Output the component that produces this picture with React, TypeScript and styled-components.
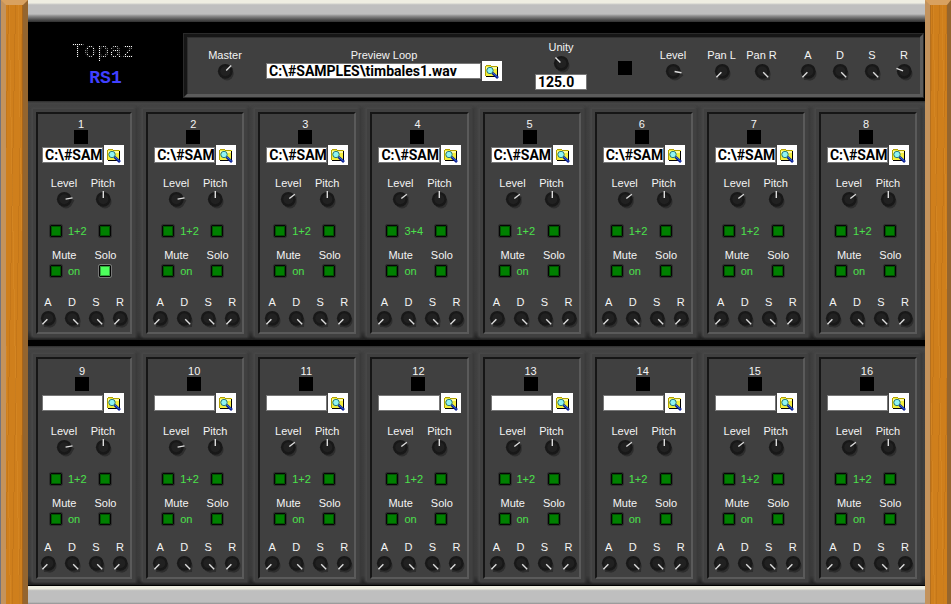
import React from "react";
import styled, { createGlobalStyle, css } from "styled-components";

const GlobalStyle = createGlobalStyle`
  *, *::before, *::after { box-sizing: border-box; }
  body {
    margin: 0;
    background: #000;
    color: #f4f4f4;
    font: 11px/12px "Liberation Sans", Arial, sans-serif;
  }
  input, button { font: inherit; margin: 0; }
`;

const Cabinet = styled.main`
  display: grid;
  grid-template-columns: 28px minmax(0, 1fr) 26px;
  min-height: 100vh;
  background: #74747c;
`;

const woodGrain = css`
  background:
    repeating-linear-gradient(91deg, transparent 0 2px, rgba(120, 60, 0, 0.12) 2px 3px, transparent 3px 7px),
    repeating-linear-gradient(89deg, transparent 0 4px, rgba(255, 190, 90, 0.1) 4px 5px, transparent 5px 9px),
    #cf7f1c;
`;

const Rail = styled.div<{ $side: "left" | "right" }>`
  ${woodGrain}
  border-style: solid;
  border-width: 5px 5px 0 5px;
  border-color: #d8a160 #94652f #94652f #c4935c;
  ${({ $side }) =>
    $side === "left"
      ? css`box-shadow: inset -1px 0 #a8651a; margin-left: 1px;`
      : css`border-right-width: 4px; box-shadow: inset 1px 0 #b5701f;`}
`;

const Rack = styled.div`
  display: flex;
  flex-direction: column;
  background: #000;
`;

const TopTrim = styled.div`
  height: 22px;
  background: linear-gradient(#efeee2 0 3px, #d0d0cc 4px, #bfbfbf 5px 14px, #8e8e8e 16px, #4a4a4a 20px, #303030 22px);
`;

const BottomTrim = styled.div`
  flex: 1;
  min-height: 19px;
  background: linear-gradient(#000 0 1px, #efeee2 1px 4px, #c8c8c4 5px, #bfbfbf 6px 17px, #909090 19px);
`;

const Header = styled.header`
  display: grid;
  grid-template-columns: 156px minmax(0, 1fr);
  height: 79px;
`;

const Brand = styled.div`
  display: flex;
  flex-direction: column;
  align-items: center;
  padding: 18px 6px 0 0;
`;

const BrandName = styled.h1`
  margin: 0;
  font: 400 21px/24px "Liberation Mono", monospace;
  color: transparent;
  background:
    conic-gradient(from 270deg at 1px 1px, #fff 90deg, rgba(255, 255, 255, 0.08) 0) 0 0 / 2px 2px;
  background-clip: text;
  -webkit-background-clip: text;
`;

const BrandModel = styled.p`
  margin: 3px 0 0;
  padding-left: 5px;
  font: 700 18px/22px "Liberation Mono", monospace;
  color: #4040ff;
`;

const MasterPanel = styled.section`
  display: flex;
  align-items: flex-start;
  margin: 12px 2px 4px 0;
  padding: 0 0 0 16px;
  background: #404040;
  border: 3px solid;
  border-color: #161616 #5c5c5c #5c5c5c #161616;
  box-shadow: inset 1px 1px #303030, 0 0 0 1px #2a2a2a;
`;

const Group = styled.div<{ $left?: number; $top?: number }>`
  display: flex;
  margin-left: ${({ $left = 0 }) => $left}px;
  padding-top: ${({ $top = 12 }) => $top}px;
`;

const Stack = styled.div`
  display: flex;
  flex-direction: column;
  align-items: center;
`;

const Spacer = styled.div`
  flex: 1;
`;

const Caption = styled.span`
  display: block;
  line-height: 12px;
  white-space: nowrap;
`;

const KnobLabel = styled.label<{ $width: number }>`
  position: relative;
  display: flex;
  flex-direction: column;
  align-items: center;
  width: ${({ $width }) => $width}px;
`;

const KnobDial = styled.svg`
  display: block;
  width: 20px;
  height: 20px;
  overflow: visible;
`;

const KnobInput = styled.input`
  position: absolute;
  inset: auto 0 0;
  width: 100%;
  height: 20px;
  opacity: 0;
`;

const PathInput = styled.input<{ $wide?: boolean }>`
  flex: ${({ $wide }) => ($wide ? "none" : "1 1 0")};
  min-width: 0;
  width: ${({ $wide }) => ($wide ? 215 : 0)}px;
  height: 16px;
  padding: 0 0 0 2px;
  border: 1px solid #777;
  border-radius: 0;
  background: #fff;
  color: #000;
  font: 700 14px/14px Roboto, sans-serif;
`;

const TempoInput = styled(PathInput)`
  flex: none;
  width: 52px;
  margin-top: 1px;
`;

const BrowseButton = styled.button`
  flex: none;
  display: grid;
  place-items: center;
  width: 20px;
  height: 20px;
  padding: 0;
  border: 0;
  background: #fff;
`;

const FileRow = styled.div<{ $top?: number }>`
  display: flex;
  align-items: center;
  gap: 1px;
  align-self: stretch;
  margin-top: ${({ $top = 0 }) => $top}px;
`;

const Row = styled.section`
  display: grid;
  grid-template-columns: repeat(8, minmax(0, 1fr));
  height: 239px;
  background: linear-gradient(#2c2c2c 0, #454545 2px, #414141 8px, #3d3d3d 96%, #262626 99%, #202020 100%);
  & + & { margin-top: 6px; }
`;

const Channel = styled.article<{ $lower: boolean }>`
  display: flex;
  flex-direction: column;
  align-items: center;
  margin: 11px 8px 6px 6px;
  padding: ${({ $lower }) => ($lower ? 6 : 4)}px 6px 0;
  background: #404040;
  border: 2px solid;
  border-color: #161616 #5a5a5a #5a5a5a #161616;
  box-shadow: 0 0 0 3px #404040, -1px -1px 2px 4px #484848, 1px 0 2px 4px #383838;
  &:first-child { margin-left: 8px; padding-left: 4px; }
`;

const ChannelHead = styled.div<{ $lower: boolean }>`
  display: flex;
  flex-direction: column;
  align-items: center;
  padding-right: ${({ $lower }) => ($lower ? 2 : 4)}px;
`;

const Lamp = styled.div`
  width: 14px;
  height: 14px;
  background: #000;
`;

const Pair = styled.div<{ $top: number }>`
  display: grid;
  grid-template-columns: 44px 34px;
  justify-content: start;
  align-self: stretch;
  margin-top: ${({ $top }) => $top}px;
`;

const LampRow = styled.div<{ $top: number }>`
  display: grid;
  grid-template-columns: 12px 31px 12px;
  column-gap: 3px;
  justify-content: start;
  align-items: center;
  align-self: stretch;
  margin-top: ${({ $top }) => $top}px;
  padding-left: 8px;
`;

const Led = styled.input`
  appearance: none;
  width: 12px;
  height: 12px;
  border: 1px solid #050505;
  outline: 1px solid #2e2e2e;
  border-radius: 1px;
  background: #008000;
  background-clip: padding-box;
  box-shadow: inset 0 0 0 1px rgba(0, 0, 0, 0.35);
  &:checked {
    background: #4dff5c;
    outline-color: #777;
  }
`;

const LedText = styled.span`
  color: #4be04b;
  text-align: left;
  padding-left: 3px;
`;

const Titles = styled.div`
  display: flex;
  gap: 18px;
  align-self: stretch;
  margin-top: 12px;
  padding-left: 10px;
`;

const Envelope = styled.div<{ $top: number }>`
  display: flex;
  align-self: flex-start;
  margin: ${({ $top }) => $top}px 0 0 -6px;
`;

type KnobProps = { label: string; angle: number; width?: number; name?: string };

function Knob({ label, angle, width = 24, name }: KnobProps) {
  return (
    <KnobLabel $width={width}>
      <Caption>{label}</Caption>
      <KnobDial viewBox="0 0 20 20" aria-hidden="true">
        <g transform="translate(2 3)" fill="#2a2a2a" opacity="0.85">
          <circle cx="10" cy="10" r="6.5" />
          <path d="M5 6 L10 1.5 L15 6 Z" transform={`rotate(${angle} 10 10)`} />
        </g>
        <circle cx="10.3" cy="10.3" r="7.4" fill="#181818" />
        <circle cx="10.3" cy="10.3" r="5" fill="#212121" />
        <line x1="10.3" y1="9" x2="10.3" y2="2" stroke="#dcdcdc" strokeWidth="1.4" transform={`rotate(${angle} 10.3 10.3)`} />
      </KnobDial>
      <KnobInput type="range" min={-135} max={225} defaultValue={angle} aria-label={name ?? label} />
    </KnobLabel>
  );
}

function FolderSearchIcon() {
  return (
    <svg width="16" height="16" viewBox="0 0 16 16" shapeRendering="crispEdges" aria-hidden="true">
      <path d="M1 3h1v-1h5v1h7v10H1z" fill="#f4ee3c" />
      <path d="M2 4h11v2H2z" fill="#fffca0" />
      <path d="M1 3h1v10H1zM2 2h5v1H2zM7 3h6v1H7z" fill="#b0a000" />
      <path d="M13 4h1v10H2v-1h11z" fill="#000" />
      <g shapeRendering="auto">
        <circle cx="6" cy="7.5" r="3.2" fill="#8ff4f4" stroke="#267878" />
        <path d="M8.5 10 L14 15" stroke="#0a1a90" strokeWidth="2.6" />
        <path d="M9 10 L13.5 14" stroke="#4aa0ff" strokeWidth="0.7" />
      </g>
    </svg>
  );
}

type ChannelData = { id: number; path: string; level: number; output: string; solo?: boolean };

const channels: ChannelData[] = Array.from({ length: 16 }, (_, i) => ({
  id: i + 1,
  path: i < 8 ? "C:\\#SAMPLES\\" : "",
  level: i % 8 < 2 ? 80 : 52,
  output: i === 3 ? "3+4" : "1+2",
  solo: i === 0,
}));

function ChannelStrip({ data }: { data: ChannelData }) {
  const lower = data.id > 8;
  const { id } = data;
  return (
    <Channel $lower={lower} aria-label={`Channel ${id}`}>
      <ChannelHead $lower={lower}>
        <Caption>{id}</Caption>
        <Lamp />
      </ChannelHead>
      <FileRow $top={lower ? 2 : 1}>
        <PathInput aria-label={`Sample ${id}`} defaultValue={data.path} />
        <BrowseButton aria-label={`Browse sample ${id}`}><FolderSearchIcon /></BrowseButton>
      </FileRow>
      <Pair $top={12}>
        <Knob label="Level" angle={data.level} width={44} name={`Level ${id}`} />
        <Knob label="Pitch" angle={0} width={34} name={`Pitch ${id}`} />
      </Pair>
      <LampRow $top={16}>
        <Led type="checkbox" aria-label={`Output ${id}`} />
        <LedText>{data.output}</LedText>
        <Led type="checkbox" aria-label={`Output option ${id}`} />
      </LampRow>
      <Titles>
        <label htmlFor={`mute-${id}`}>Mute</label>
        <label htmlFor={`solo-${id}`}>Solo</label>
      </Titles>
      <LampRow $top={4}>
        <Led type="checkbox" id={`mute-${id}`} />
        <LedText>on</LedText>
        <Led type="checkbox" id={`solo-${id}`} defaultChecked={data.solo} />
      </LampRow>
      <Envelope $top={lower ? 16 : 19}>
        <Knob label="A" angle={225} name={`Attack ${id}`} />
        <Knob label="D" angle={135} name={`Decay ${id}`} />
        <Knob label="S" angle={135} name={`Sustain ${id}`} />
        <Knob label="R" angle={225} name={`Release ${id}`} />
      </Envelope>
    </Channel>
  );
}

export default function App() {
  return (
    <>
      <GlobalStyle />
      <Cabinet>
        <Rail $side="left" />
        <Rack>
          <TopTrim />
          <Header>
            <Brand>
              <BrandName>Topaz</BrandName>
              <BrandModel>RS1</BrandModel>
            </Brand>
            <MasterPanel aria-label="Master">
              <Group><Knob label="Master" angle={45} width={44} /></Group>
              <Group $left={19}>
                <Stack>
                  <label htmlFor="preview"><Caption>Preview Loop</Caption></label>
                  <FileRow>
                    <PathInput $wide id="preview" defaultValue="C:\#SAMPLES\timbales1.wav" />
                    <BrowseButton aria-label="Browse preview loop"><FolderSearchIcon /></BrowseButton>
                  </FileRow>
                </Stack>
              </Group>
              <Group $left={33} $top={4}>
                <Stack>
                  <Knob label="Unity" angle={-45} />
                  <TempoInput aria-label="Tempo" defaultValue="125.0" />
                </Stack>
              </Group>
              <Group $left={31} $top={24}><Lamp /></Group>
              <Spacer />
              <Group>
                <Knob label="Level" angle={100} width={54} />
                <Knob label="Pan L" angle={225} width={43} />
                <Knob label="Pan R" angle={135} width={37} />
              </Group>
              <Group $left={12}>
                <Knob label="A" angle={225} width={32} name="Attack" />
                <Knob label="D" angle={135} width={32} name="Decay" />
                <Knob label="S" angle={135} width={32} name="Sustain" />
                <Knob label="R" angle={-70} width={32} name="Release" />
              </Group>
            </MasterPanel>
          </Header>
          <Row>{channels.slice(0, 8).map((c) => <ChannelStrip key={c.id} data={c} />)}</Row>
          <Row>{channels.slice(8).map((c) => <ChannelStrip key={c.id} data={c} />)}</Row>
          <BottomTrim />
        </Rack>
        <Rail $side="right" />
      </Cabinet>
    </>
  );
}
